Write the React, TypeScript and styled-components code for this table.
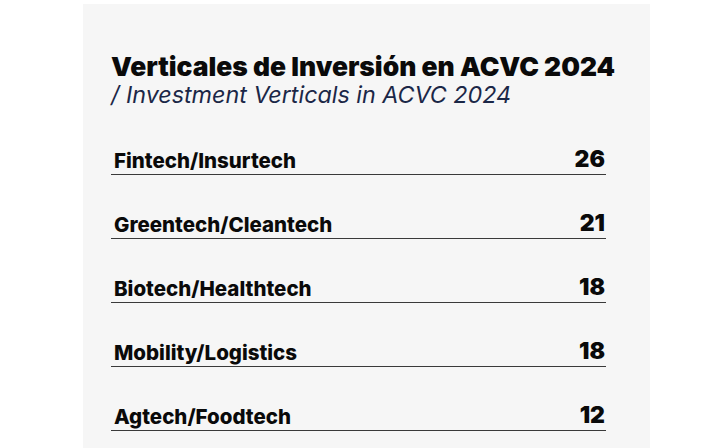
import styled, { createGlobalStyle } from "styled-components";

const Global = createGlobalStyle`
  html, body {
    margin: 0;
    padding: 0;
    background: #ffffff;
  }
  body {
    font-family: Inter, "Liberation Sans", sans-serif;
    height: 448px;
    overflow: hidden;
  }
`;

const Page = styled.main`
  display: flex;
  padding: 4px 0 0 83px;
`;

const Card = styled.section`
  width: 567px;
  min-height: 444px;
  box-sizing: border-box;
  background: #f6f6f6;
  padding: 48px 44px 0 28px;
`;

const Title = styled.h1`
  margin: 0;
  font-size: 26.4px;
  font-weight: 900;
  line-height: 29px;
  color: #0a0a0a;
  white-space: nowrap;
`;

const Subtitle = styled.p`
  margin: 0;
  font-size: 23.3px;
  font-style: italic;
  font-weight: 400;
  line-height: 28px;
  color: #1b2747;
  white-space: nowrap;
`;

const List = styled.ul`
  list-style: none;
  margin: 39px 0 0;
  padding: 0;
  display: flex;
  flex-direction: column;
  gap: 37px;
`;

const Row = styled.li`
  display: flex;
  align-items: flex-end;
  justify-content: space-between;
  border-bottom: 1px solid #3a3a3a;
  padding: 0 1px 1px 3px;
  height: 25px;
`;

const Label = styled.span`
  font-size: 20.5px;
  font-weight: 800;
  color: #0a0a0a;
`;

const Value = styled.span`
  font-size: 23px;
  font-weight: 900;
  color: #0a0a0a;
`;

const rows = [
  { label: "Fintech/Insurtech", value: 26 },
  { label: "Greentech/Cleantech", value: 21 },
  { label: "Biotech/Healthtech", value: 18 },
  { label: "Mobility/Logistics", value: 18 },
  { label: "Agtech/Foodtech", value: 12 },
];

export default function App() {
  return (
    <Page>
      <Global />
      <Card>
        <Title>Verticales de Inversión en ACVC 2024</Title>
        <Subtitle>/ Investment Verticals in ACVC 2024</Subtitle>
        <List>
          {rows.map((r) => (
            <Row key={r.label}>
              <Label>{r.label}</Label>
              <Value>{r.value}</Value>
            </Row>
          ))}
        </List>
      </Card>
    </Page>
  );
}
